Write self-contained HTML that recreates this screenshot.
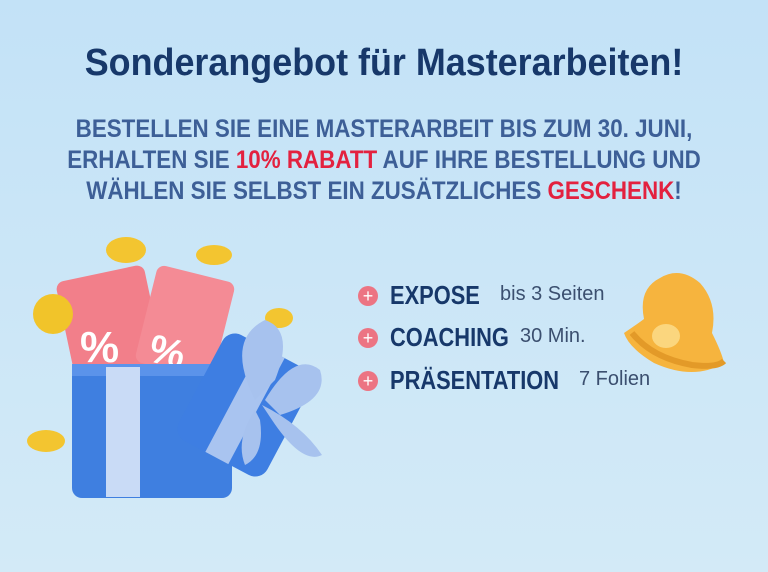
<!DOCTYPE html>
<html><head><meta charset="utf-8"><style>
body{margin:0;width:768px;height:572px;overflow:hidden;background:linear-gradient(#c3e2f7,#cde7f7 60%,#d3eaf7);font-family:"Liberation Sans",sans-serif;position:relative}
.t{position:absolute;left:0;width:768px;text-align:center;color:#17386a;font-weight:bold}
h1{margin:0;font-size:38px;top:42px;transform:scaleX(0.945)}
.s{font-size:25px;color:#3d5f97;line-height:31px;top:114px;transform:scaleX(0.895)}
.r{color:#e3213f}
.pl{position:absolute;left:358px;width:20px;height:20px;border-radius:50%;background:#ec7483;color:#fff;font-size:18px;line-height:20px;text-align:center}
.b{position:absolute;left:390px;font-weight:bold;font-size:26px;color:#17386a;transform:scaleX(0.84);transform-origin:0 0;white-space:nowrap}
.l{position:absolute;font-size:20px;color:#3b4f6f;white-space:nowrap}
</style></head><body>
<h1 class="t">Sonderangebot für Masterarbeiten!</h1>
<div class="t s">BESTELLEN SIE EINE MASTERARBEIT BIS ZUM 30. JUNI,<br>ERHALTEN SIE <span class="r">10% RABATT</span> AUF IHRE BESTELLUNG UND<br>WÄHLEN SIE SELBST EIN ZUSÄTZLICHES <span class="r">GESCHENK</span>!</div>
<div class="pl" style="top:286px">+</div><div class="b" style="top:280px">EXPOSE</div><div class="l" style="left:500px;top:283px">bis 3 Seiten</div>
<div class="pl" style="top:328px">+</div><div class="b" style="top:322px">COACHING</div><div class="l" style="left:520px;top:325px">30 Min.</div>
<div class="pl" style="top:371px">+</div><div class="b" style="top:365px">PRÄSENTATION</div><div class="l" style="left:579px;top:368px">7 Folien</div>
<svg width="768" height="572" style="position:absolute;left:0;top:0">
<g transform="rotate(-12 110 310)"><rect x="62" y="272" width="90" height="100" rx="8" fill="#f27f8a"/></g>
<g transform="rotate(14 185 310)"><rect x="148" y="272" width="80" height="100" rx="8" fill="#f48b95"/></g>
<text x="80" y="362" font-family="Liberation Sans" font-weight="bold" font-size="44" fill="#fff">%</text>
<text x="150" y="366" font-family="Liberation Sans" font-weight="bold" font-size="40" fill="#fff" transform="rotate(14 170 350)">%</text>
<ellipse cx="126" cy="250" rx="20" ry="13" fill="#f3c530"/>
<ellipse cx="214" cy="255" rx="18" ry="10" fill="#f3c530"/>
<ellipse cx="53" cy="314" rx="20" ry="20" fill="#f1c42a"/>
<ellipse cx="279" cy="318" rx="14" ry="10" fill="#f3c530"/>
<ellipse cx="46" cy="441" rx="19" ry="11" fill="#f3c530"/>
<rect x="72" y="364" width="160" height="134" rx="10" fill="#3f7fe0"/>
<rect x="72" y="364" width="160" height="12" fill="#5b93ea"/>
<rect x="106" y="367" width="34" height="130" fill="#c9dbf6"/>
<g transform="rotate(28 245 405)"><rect x="195" y="345" width="100" height="120" rx="14" fill="#3e7ee2"/><rect x="232" y="345" width="26" height="120" fill="#a9c4f0"/></g>
<path d="M255 400 q-30-60 10-80 q30 10 10 60z M265 400 q30-50 55-30 q10 30-40 45z M262 405 q40 20 60 50 q-20 10-50-35z M255 410 q-20 30-10 55 q20-10 15-45z" fill="#a7c2ee"/>
<path d="M660 278 q20-12 40 5 q18 20 12 50 q10 20 12 30 q-30 18-70 0 q-25-15-30-30 q12-8 20-14 q-6-30 16-41z" fill="#f6b43e"/>
<path d="M632 333 q20 25 60 32 q25 3 32-4" stroke="#e39a28" stroke-width="6" fill="none"/>
<ellipse cx="666" cy="336" rx="14" ry="12" fill="#fbd67e"/>
</svg>
</body></html>
